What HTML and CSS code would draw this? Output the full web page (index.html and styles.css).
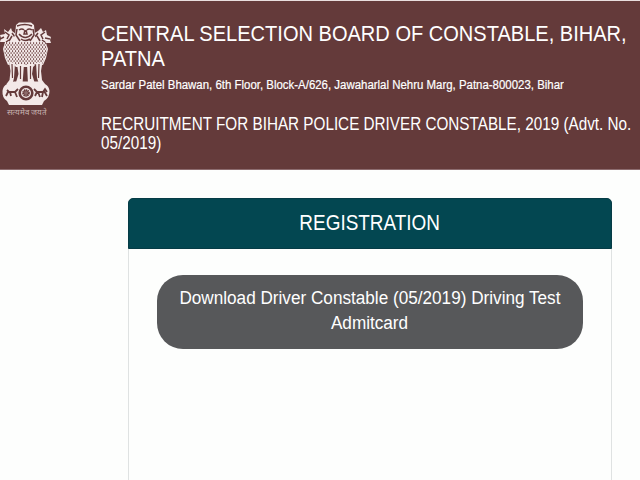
FILE: index.html
```html
<!DOCTYPE html>
<html lang="en">
<head>
    <meta charset="UTF-8">
    <meta name="viewport" content="width=device-width, initial-scale=1.0">
    <title>Central Selection Board of Constable</title>
    <link rel="stylesheet" href="styles.css">
</head>
<body>
    <header class="site-header">
        <div class="emblem">
            <svg width="54" height="86" viewBox="0 0 54 86">
                <defs>
                    <pattern id="mane" width="3" height="4" patternUnits="userSpaceOnUse">
                        <path d="M0.6 0.2v1.9M2.1 2.1v1.9" stroke="#643a3a" stroke-width="0.9" fill="none"/>
                    </pattern>
                </defs>
                <!-- side lions -->
                <path d="M16 12L12 9L11 6L8 10L4 7L5 12L0 13L1 16L0 20L5 20L3 27L5 36L8 43L17 41Z" fill="#f3e9e8"/>
                <path d="M33 12L38 9L41 6L43 10L46 8L47 13L51 15L50 18L51 21L46 21L48 27L46 36L43 43L33 41Z" fill="#f3e9e8"/>
                <path d="M0 17l4-2M5 10l4 3l-2 4M9 19l3-5M12 11l3 4M6 20l3-2M45 10l-4 3l2 4M50 17l-5-1M40 19l-3-5M38 11l-3 4M45 20l-3-2" stroke="#643a3a" stroke-width="1.5" fill="none"/>
                <!-- front lion -->
                <path d="M16 3L19 0.5H31L34 3L35 14L37 20L39 39L33 45H16L10 39L12 20L15 13Z" fill="#f3e9e8"/>
                <path d="M5 20H46L47 30L42 43H9L4 30Z" fill="url(#mane)"/>
                <path d="M17 4Q25 1 32 4M17 7l-1 6l4 6M33 7l1 6l-4 6M19 8q3-2 5 0M27 8q2-2 5 0M25 8l-1 4h3l-1-4M19 12q6 7 13 0M21 17q4 3 9 0" stroke="#643a3a" stroke-width="1.5" fill="none"/>
                <!-- legs -->
                <path d="M9 40l1.500 9l-1 9l-3 4h6l1.500-6l1-15M17 42l1.500 10l-3 10h7l1.500-20M27 42l1 20h7l-3-10l1.500-10M36 41l1 15l2 6h6l-3-4l-1-9l1.500-9" fill="#f3e9e8"/>
                <path d="M12 42l0.500 14M20.500 44v13M30.500 44v13M39 42l-0.500 14" stroke="#643a3a" stroke-width="1.200" fill="none"/>
                <!-- abacus -->
                <path d="M7 62L14 59.500H38L45 62Q49 64 49.500 69Q49.500 76 44 79L42 83H9L7 79Q2 76 2.500 69Q3 64 7 62Z" fill="#f3e9e8"/>
                <circle cx="26" cy="71" r="6.300" fill="#f3e9e8" stroke="#643a3a" stroke-width="2.600"/>
                <circle cx="26" cy="71" r="2.800" fill="#8d6c6b" stroke="#643a3a" stroke-width="2" stroke-dasharray="1.300 0.500"/>
                <path d="M7 68l2 2h6l3-3M8 70l-2 4M10 70l1 4M15 70l2 5M34 67l3 3h6l2-3l2 3M37 70l-2 4M38 70l2 5M43 70l-1 5M44 69l3 5" stroke="#643a3a" stroke-width="1.800" fill="none"/>
            </svg>
            <span class="motto" lang="hi">सत्यमेव जयते</span>
        </div>
        <div class="board">
            <h1><span>CENTRAL SELECTION BOARD OF CONSTABLE, BIHAR,</span><span>PATNA</span></h1>
            <p class="address"><span>Sardar Patel Bhawan, 6th Floor, Block-A/626, Jawaharlal Nehru Marg, Patna-800023, Bihar</span></p>
            <h2><span>RECRUITMENT FOR BIHAR POLICE DRIVER CONSTABLE, 2019 (Advt. No.</span><span>05/2019)</span></h2>
        </div>
    </header>

    <main class="card">
        <h3 class="card-header"><span>REGISTRATION</span></h3>
        <div class="card-body">
            <a class="download-btn" href="#">
                <span>Download Driver Constable (05/2019) Driving Test</span>
                <span>Admitcard</span>
            </a>
        </div>
    </main>
</body>
</html>
```
FILE: styles.css
```css
* {
    box-sizing: border-box;
}

body {
    margin: 0;
    height: 480px;
    overflow: hidden;
    display: flex;
    flex-direction: column;
    font-family: "Liberation Sans", Arial, sans-serif;
    color: #fff;
    background-color: #fdfefd;
}

h1, h2, h3, p {
    margin: 0;
    font-weight: normal;
}

/* condensed text lines */
h1 span, h2 span, .address span {
    display: block;
    width: max-content;
    white-space: nowrap;
    transform-origin: left;
}

.site-header {
    display: flex;
    flex: none;
    height: 170px;
    border-top: 1px solid #e9dede;
    border-bottom: 1px solid #8d6c6f;
    background-color: #643a3a;
}

.emblem {
    width: 101px;
    flex: none;
    padding-top: 21px;
}

.emblem svg {
    display: block;
}

.motto {
    display: block;
    width: 54px;
    text-align: center;
    font-size: 8px;
    line-height: 10px;
    color: #c9b3b2;
}

.board {
    width: 539px;
    padding-top: 20px;
}

h1 {
    font-size: 22px;
    line-height: 25px;
}

h1 span {
    transform: scaleX(0.911);
}

.address {
    margin-top: 6px;
    font-size: 12.5px;
    line-height: 16px;
    -webkit-text-stroke: 0.2px #fff;
}

.address span {
    transform: scaleX(0.915);
}

h2 {
    margin-top: 22px;
    font-size: 17.5px;
    line-height: 19px;
}

h2 span {
    transform: scaleX(0.872);
}

.card {
    flex: 1;
    width: 484px;
    margin: 28px 0 0 128px;
    border: 1px solid #dfe2e2;
    border-bottom: 0;
    border-radius: 5px 5px 0 0;
}

.card-header {
    height: 51px;
    margin: -1px -1px 0;
    border: 1px solid #063c46;
    border-radius: 5px 5px 0 0;
    background-color: #034751;
    text-align: center;
    font-size: 22px;
    line-height: 48px;
}

.card-header span {
    display: inline-block;
    transform: scaleX(0.861);
}

.card-body {
    padding: 26px 28px;
}

.download-btn {
    display: flex;
    flex-direction: column;
    align-items: center;
    height: 74px;
    padding-top: 11px;
    border-radius: 26px;
    background-color: #57585a;
    color: #fff;
    text-decoration: none;
    font-size: 18px;
    line-height: 25px;
}

.download-btn span {
    white-space: nowrap;
    transform: scaleX(0.953);
}
```
